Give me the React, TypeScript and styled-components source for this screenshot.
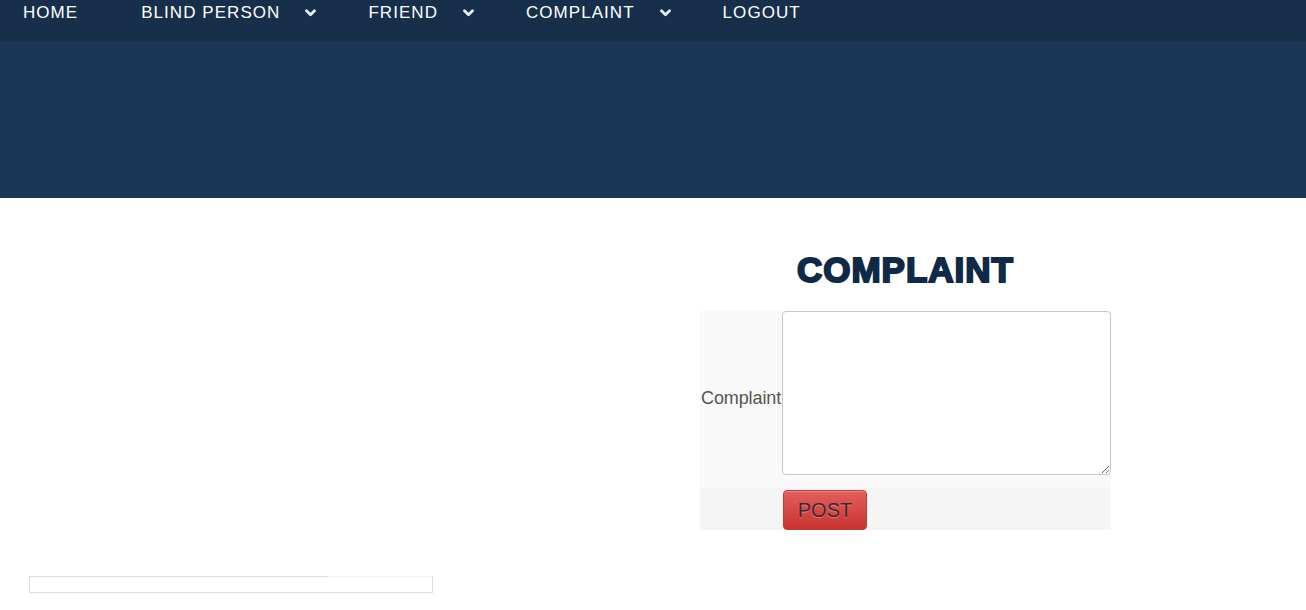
import styled, { createGlobalStyle } from "styled-components";

const GlobalStyle = createGlobalStyle`
  body {
    margin: 0;
    background: #ffffff;
    font-family: "Liberation Sans", Arial, sans-serif;
  }
`;

const Chevron = () => (
  <svg width="11" height="8" viewBox="0 0 11 8">
    <path d="M1.5 1.8 L5.5 5.8 L9.5 1.8" fill="none" stroke="#e8eef5" strokeWidth="2.8" strokeLinecap="round" strokeLinejoin="round" />
  </svg>
);

const navItems = [
  { label: "HOME", menu: false },
  { label: "BLIND PERSON", menu: true },
  { label: "FRIEND", menu: true },
  { label: "COMPLAINT", menu: true },
  { label: "LOGOUT", menu: false },
];

const App = () => {
  return (
    <>
      <GlobalStyle />
      <Header>
        <NavBar>
          {navItems.map((item) => (
            <NavItem key={item.label} $menu={item.menu}>
              {item.label}
              {item.menu ? (
                <Caret>
                  <Chevron />
                </Caret>
              ) : null}
            </NavItem>
          ))}
        </NavBar>
        <Banner />
      </Header>
      <Main>
        <LeftColumn />
        <FormColumn>
          <Title>COMPLAINT</Title>
          <FormTable>
            <LabelCell>Complaint</LabelCell>
            <FieldCell>
              <TextArea />
            </FieldCell>
            <ActionLabel />
            <ActionCell>
              <PostButton>POST</PostButton>
            </ActionCell>
          </FormTable>
        </FormColumn>
      </Main>
      <FooterBox>
        <FooterGap />
      </FooterBox>
    </>
  );
};

const Header = styled.header`
  display: flex;
  flex-direction: column;
`;
const NavBar = styled.nav`
  display: flex;
  align-items: center;
  height: 41px;
  padding: 0 0 16px 23px;
  background: #172f4b;
  box-sizing: border-box;
`;
const NavItem = styled.div<{ $menu: boolean }>`
  display: flex;
  align-items: center;
  color: #ffffff;
  font-size: 17px;
  letter-spacing: 1.05px;
  line-height: 17px;
  margin-right: ${({ $menu }) => ($menu ? "52px" : "63px")};
`;
const Caret = styled.span`
  display: flex;
  margin-left: 25px;
`;
const Banner = styled.div`
  height: 157px;
  background: #1b3656;
`;
const Main = styled.main`
  display: grid;
  grid-template-columns: 700px 411px;
`;
const LeftColumn = styled.div``;
const FormColumn = styled.div`
  display: flex;
  flex-direction: column;
  align-items: stretch;
  padding-top: 52px;
`;
const Title = styled.h2`
  margin: 0 0 21px;
  text-align: center;
  font-family: "Liberation Sans", Arial, sans-serif;
  font-size: 35px;
  line-height: 40px;
  font-weight: 700;
  letter-spacing: 1px;
  color: #0f2a47;
  -webkit-text-stroke: 2px #0f2a47;
`;
const FormTable = styled.div`
  display: grid;
  grid-template-columns: 82px 329px;
  grid-template-rows: 177px 42px;
`;
const LabelCell = styled.div`
  display: flex;
  align-items: center;
  padding: 0 0 3px 1px;
  background: #f9f9f9;
  color: #555555;
  font-size: 18px;
  letter-spacing: -0.1px;
  white-space: nowrap;
`;
const FieldCell = styled.div`
  background: #f9f9f9;
`;
const TextArea = styled.textarea`
  display: block;
  width: 329px;
  height: 164px;
  margin: 0;
  box-sizing: border-box;
  border: 1px solid #c8c8c8;
  border-radius: 4px;
  background: #ffffff;
  resize: both;
`;
const ActionLabel = styled.div`
  background: #f5f5f5;
`;
const ActionCell = styled.div`
  display: flex;
  align-items: flex-end;
  background: #f5f5f5;
  padding-left: 1px;
`;
const PostButton = styled.button`
  width: 84px;
  height: 40px;
  padding: 0;
  border: 1px solid #bd3a36;
  border-radius: 4px;
  background: linear-gradient(#e35f5d, #c8332f);
  color: #3a2a2e;
  font-family: "Liberation Sans", Arial, sans-serif;
  font-size: 20px;
  text-shadow: 0 1px 1px rgba(255, 160, 160, 0.6);
  box-shadow: inset 0 1px 0 rgba(255, 255, 255, 0.25);
`;
const FooterBox = styled.div`
  position: relative;
  width: 404px;
  height: 17px;
  margin: 46px 0 0 29px;
  border: 1px solid #dcdcdc;
  box-sizing: border-box;
`;
const FooterGap = styled.div`
  position: absolute;
  top: -1px;
  left: 298px;
  right: 0;
  height: 1px;
  background: #f4f4f4;
`;

export default App;
